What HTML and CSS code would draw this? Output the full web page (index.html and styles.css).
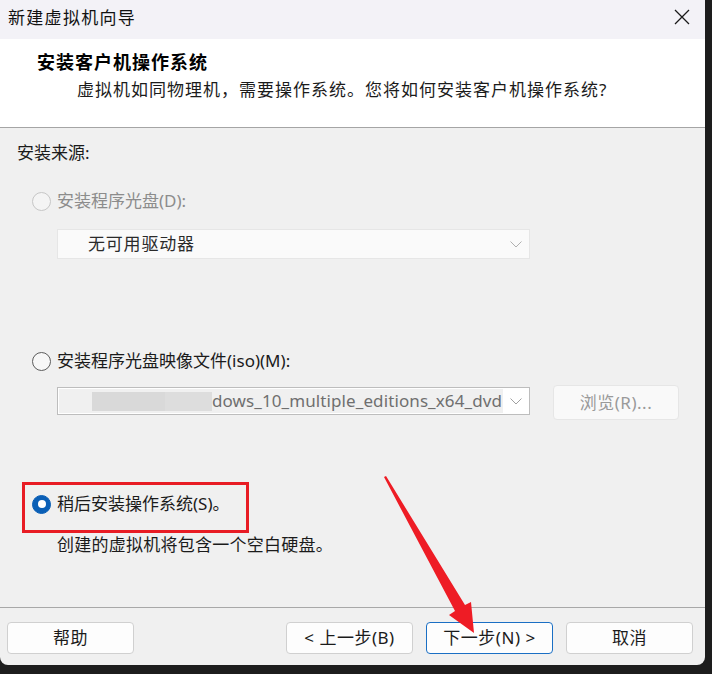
FILE: index.html
```html
<!DOCTYPE html>
<html lang="zh-CN">
<head>
<meta charset="utf-8">
<title>新建虚拟机向导</title>
<link rel="stylesheet" href="styles.css">
</head>
<body>
<div class="window">
  <div class="titlebar">
    <span class="title">新建虚拟机向导</span>
    <svg class="close" width="16" height="16" viewBox="0 0 16 16"><path d="M1 1L15 15M15 1L1 15" stroke="#1a1a1a" stroke-width="1.3" fill="none"/></svg>
  </div>
  <div class="header">
    <div class="heading">安装客户机操作系统</div>
    <div class="subtitle">虚拟机如同物理机，需要操作系统。您将如何安装客户机操作系统?</div>
  </div>
  <div class="content">
    <div class="section-label">安装来源:</div>
    <div class="radio-row disabled r1"><span class="radio"></span><span class="label">安装程序光盘(D):</span></div>
    <div class="select select-disabled">
      <span class="select-text">无可用驱动器</span>
      <svg class="chev" width="12" height="7" viewBox="0 0 12 7"><path d="M0.5 0.5L6 6L11.5 0.5" stroke="#b0b0b0" stroke-width="1" fill="none"/></svg>
    </div>
    <div class="radio-row r2"><span class="radio"></span><span class="label">安装程序光盘映像文件(iso)(M):</span></div>
    <div class="iso-row">
      <div class="select select-iso">
        <div class="field"><span class="blur"><span class="blur-a"></span><span class="blur-b"></span></span><span class="path">dows_10_multiple_editions_x64_dvd</span></div>
        <svg class="chev" width="12" height="7" viewBox="0 0 12 7"><path d="M0.5 0.5L6 6L11.5 0.5" stroke="#a0a0a0" stroke-width="1" fill="none"/></svg>
      </div>
      <button class="btn btn-browse">浏览(R)...</button>
    </div>
    <div class="radio-row r3"><span class="radio checked"></span><span class="label">稍后安装操作系统(S)。</span></div>
    <div class="desc">创建的虚拟机将包含一个空白硬盘。</div>
  </div>
  <div class="footer">
    <button class="btn">帮助</button>
    <span class="spacer"></span>
    <button class="btn">&lt; 上一步(B)</button>
    <button class="btn btn-primary">下一步(N) &gt;</button>
    <button class="btn">取消</button>
  </div>
</div>
<div class="highlight"></div>
<svg class="arrow" width="712" height="674" viewBox="0 0 712 674"><polygon points="384,477 386,476 465,605 471,602 474,633 449,615 455,611" fill="#ee1c25"/></svg>
</body>
</html>
```

FILE: styles.css
```css
* { box-sizing: border-box; }
html, body { margin: 0; padding: 0; }
body {
  width: 712px;
  height: 674px;
  background: #1d1d1d;
  position: relative;
  overflow: hidden;
  font-family: "Noto Sans", "Noto Sans CJK SC", sans-serif;
  color: #1b1b1b;
}
.window {
  width: 705px;
  height: 665px;
  background: #f0f0f0;
  border-radius: 0 0 8px 8px;
  overflow: hidden;
  display: flex;
  flex-direction: column;
}
.titlebar {
  height: 39px;
  flex: none;
  background: #f3f2f7;
  display: flex;
  align-items: center;
  justify-content: space-between;
  padding: 0 16px 0 8px;
}
.title {
  font-size: 17px;
  letter-spacing: 1.3px;
  line-height: 24px;
  margin-top: -4px;
  color: #111;
}
.close { margin-top: -5px; margin-right: -1px; }
.header {
  height: 89px;
  flex: none;
  background: #ffffff;
  border-bottom: 1px solid #a5a5a5;
  padding: 11px 0 0 37px;
}
.heading {
  font-size: 18px;
  font-weight: 700;
  letter-spacing: 1px;
  line-height: 24px;
  color: #000;
}
.subtitle {
  margin-top: 4px;
  margin-left: 40px;
  font-size: 17px;
  letter-spacing: 1px;
  line-height: 24px;
  color: #1b1b1b;
}
.content {
  flex: 1;
  padding: 13px 0 0 17px;
  font-size: 17px;
  line-height: 24px;
}
.section-label { height: 24px; }
.radio-row {
  display: flex;
  align-items: center;
  height: 24px;
  padding-left: 15px;
}
.radio {
  width: 19px;
  height: 19px;
  border-radius: 50%;
  border: 1.4px solid #5c5c5c;
  background: #f7f7f7;
  margin-right: 6px;
  flex: none;
  display: flex;
  align-items: center;
  justify-content: center;
}
.radio.checked {
  background: #0a5fb6;
  border-color: #0a5fb6;
}
.radio.checked::after {
  content: "";
  width: 8px;
  height: 8px;
  border-radius: 50%;
  background: #ffffff;
}
.disabled .radio {
  border: 1px solid #c6c6c6;
  background: #f4f4f4;
}
.disabled .label { color: #8c8c8c; }
.r1 { margin-top: 24px; }
.r2 { margin-top: 90px; }
.r3 { margin-top: 72px; }
.select {
  margin-left: 40px;
  width: 473px;
  display: flex;
  align-items: center;
  justify-content: space-between;
  padding-right: 7px;
}
.select-disabled {
  margin-top: 16px;
  height: 30px;
  background: #fafafa;
  border: 1px solid #e6e6e6;
  padding-left: 30px;
}
.select-text { color: #2a2a2a; letter-spacing: 0.8px; }
.iso-row {
  margin-top: 12px;
  display: flex;
  align-items: flex-start;
  height: 35px;
}
.select-iso {
  margin-top: 2px;
  height: 28px;
  background: #ffffff;
  border: 1px solid #bdbdbd;
  padding-left: 1px;
}
.field {
  width: 444px;
  height: 24px;
  background: #f0f0f0;
  display: flex;
  align-items: center;
  overflow: hidden;
  white-space: nowrap;
}
.blur {
  display: flex;
  margin-left: 33px;
  height: 19px;
  flex: none;
}
.blur-a { width: 73px; background: #d9d9d9; }
.blur-b { width: 47px; background: #dddddd; }
.path {
  font-size: 17px;
  color: #6f6f6f;
  letter-spacing: 0.1px;
}
.chev { flex: none; }
.btn {
  font-family: "Noto Sans", "Noto Sans CJK SC", sans-serif;
  font-size: 17px;
  line-height: 24px;
  color: #1b1b1b;
  background: #fdfdfd;
  border: 1px solid #d0d0d0;
  border-radius: 4px;
  width: 127px;
  height: 32px;
  padding: 0;
  letter-spacing: 0.5px;
}
.btn-browse {
  margin-left: 23px;
  width: 126px;
  height: 35px;
  background: #f9f9f9;
  border-color: #e6e6e6;
  color: #9a9a9a;
}
.desc {
  margin-top: 17px;
  margin-left: 40px;
  letter-spacing: 0.25px;
}
.footer {
  height: 58px;
  flex: none;
  border-top: 1px solid #a8a8a8;
  display: flex;
  align-items: flex-start;
  gap: 13px;
  padding: 14px 12px 0 7px;
}
.spacer { flex: 1; }
.btn-primary { border-color: #1a6fc4; }
.highlight {
  position: absolute;
  left: 22px;
  top: 482px;
  width: 227px;
  height: 51px;
  border: 3px solid #e81c24;
  pointer-events: none;
}
.arrow {
  position: absolute;
  left: 0;
  top: 0;
  pointer-events: none;
}
```
